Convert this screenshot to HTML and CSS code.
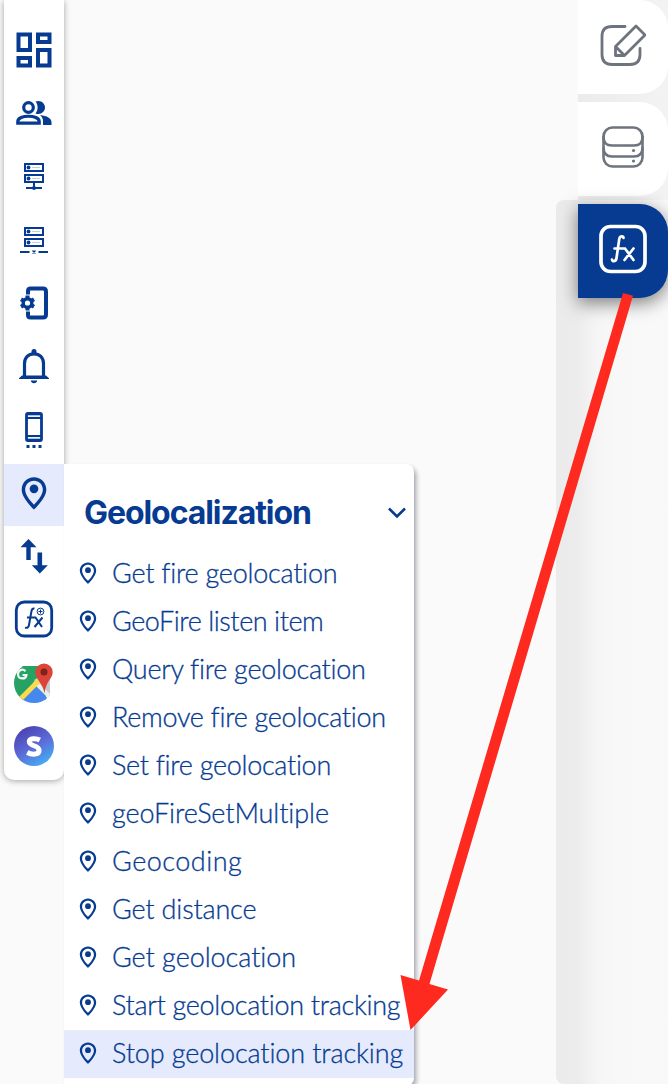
FILE: index.html
```html
<!DOCTYPE html>
<html lang="en">
<head>
<meta charset="utf-8">
<title>Geolocalization</title>
<link rel="stylesheet" href="styles.css">
</head>
<body>
<svg class="defs" width="0" height="0">
  <symbol id="pin" viewBox="0 0 24 24"><path fill="currentColor" d="M12 1.500C7.500 1.500 3.800 5.100 3.800 9.600 3.800 15.500 12 23 12 23s8.200-7.500 8.200-13.400C20.200 5.100 16.500 1.500 12 1.500zm0 2.300c3.300 0 5.900 2.600 5.900 5.900 0 3.300-3.200 7.500-5.900 10.100-2.700-2.600-5.900-6.800-5.900-10.100 0-3.300 2.600-5.900 5.900-5.900z"/><circle fill="currentColor" cx="12" cy="9.200" r="2.900"/></symbol>
</svg>
<div class="app">
  <nav class="sidebar">
    <a class="tool"><svg width="36" height="36" viewBox="0 0 36 36" fill="none" stroke="currentColor" stroke-width="4"><path d="M2.500 2.500h11.500v15.500H2.500zM22 2.500h11.500v7.500H22zM2.500 26h11.500v7.500H2.500zM22 18h11.500v15.500H22z"/></svg></a>
    <a class="tool"><svg width="36" height="26" viewBox="0 0 36 26" fill="none" stroke="currentColor" stroke-width="3.200"><circle cx="12.500" cy="7.500" r="4.800"/><path d="M1.800 23.200v-1.700c0-7 21.400-7 21.400 0v1.700z"/><path fill="currentColor" stroke="none" d="M19.500 1.600c5-2 9.500 1.500 9.500 5.900s-4.500 7.900-9.500 5.900c2.800-3.300 2.800-8.500 0-11.800zM24 15c7 .8 11.500 3.400 11.500 7v3H27v-3.500c0-2.700-.8-4.600-3-6.500z"/></svg></a>
    <a class="tool"><svg width="28" height="28" viewBox="0 0 28 28" fill="none" stroke="currentColor" stroke-width="2"><path d="M5 2h18v7H5zM5 13h18v7H5zM14 20v6M6 26h16"/><path d="M12 5.500h8M12 16.500h8" stroke-width="1" opacity=".25"/><g fill="currentColor" stroke="none"><circle cx="8.500" cy="5.500" r="1.900"/><circle cx="8.500" cy="16.500" r="1.900"/><circle cx="14" cy="26" r="2"/></g></svg></a>
    <a class="tool"><svg width="28" height="28" viewBox="0 0 28 28" fill="none" stroke="currentColor" stroke-width="2"><path d="M5 2h18v7H5zM5 13h18v7H5zM0 26h9.500M18.500 26H28"/><path d="M12.500 24.500l3 3m0-3l-3 3" stroke-width="1.400"/><path d="M12 5.500h8M12 16.500h8" stroke-width="1" opacity=".25"/><g fill="currentColor" stroke="none"><circle cx="8.500" cy="5.500" r="1.900"/><circle cx="8.500" cy="16.500" r="1.900"/></g></svg></a>
    <a class="tool"><svg width="28" height="34" viewBox="0 0 28 34" fill="none" stroke="currentColor"><path stroke-width="4" d="M8 8.500V5q0-2.500 2.500-2.500H23q3 0 3 3v23q0 3-3 3H10.500Q8 31.500 8 29v-3.500"/><circle cx="7.500" cy="17" r="4.300" stroke-width="3.400"/><path stroke-width="4" d="M7.500 9.500v3M7.500 21.500v3M1 13.250l2.600 1.500M11.400 19.250l2.600 1.500M1 20.750l2.600-1.500M11.400 14.750l2.600-1.500"/></svg></a>
    <a class="tool"><svg width="32" height="36" viewBox="0 0 32 36" fill="none" stroke="currentColor"><path stroke-width="3.200" d="M6.500 28V15.500C6.500 9.500 10.500 5.800 16 5.800s9.500 3.700 9.500 9.700V28"/><path fill="currentColor" stroke="none" d="M13.500 6V3.500a2.500 2.500 0 0 1 5 0V6zM4 27.500h24l3 2.700V31H1v-.8zM12.800 32.500h6.400c-.3 1.800-1.500 2.800-3.200 2.800s-2.900-1-3.200-2.800z"/></svg></a>
    <a class="tool"><svg width="20" height="36" viewBox="0 0 20 36" fill="none" stroke="currentColor"><rect x="2.500" y="1.500" width="15" height="27" rx="1.500" stroke-width="2.800"/><path stroke-width="2.200" d="M2 6h16M2 24h16"/><path stroke-width="1" opacity=".4" d="M4 3.700h12M4 26.300h12"/><path stroke-width="3" d="M2.500 34.500h3M8.500 34.500h3M14.500 34.500h3"/></svg></a>
    <a class="tool active"><svg width="36" height="36" viewBox="0 0 24 24"><use href="#pin"/></svg></a>
    <a class="tool"><svg width="28" height="36" viewBox="0 0 28 36" fill="currentColor"><path d="M8.500 1L16.500 9.300h-5.800V22H6.300V9.300H.5zM17.500 14.500v12.700h-5.700l8 8.300 8-8.300h-5.700V14.500z"/></svg></a>
    <a class="tool"><svg width="40" height="38" viewBox="0 0 40 38" fill="none" stroke="currentColor"><rect x="2.300" y="2" width="35.400" height="34" rx="8" stroke-width="2.800"/><path stroke-width="2" d="M20.500 8.500c-2-.3-2.700.7-3 2.500L15 25c-.3 2.300-1.500 3.200-4 2.600M13 17.500h8.500l6.500 9.500M28.500 17.500l-8 9.500"/><circle cx="26.500" cy="11.500" r="3.400" stroke-width="1"/><path stroke-width="1" d="M24.500 11.500h4M26.500 9.500v4"/></svg></a>
    <a class="tool"><svg width="40" height="40" viewBox="0 0 40 40"><clipPath id="disc"><circle cx="20" cy="20" r="20"/></clipPath><g clip-path="url(#disc)"><path fill="#26a364" d="M0 3h32v34H0z"/><path fill="#c6c9ce" d="M20 17l16-10v30z"/><path fill="#4688ef" d="M20 21l16 17-16 5L5 36z"/><path fill="#eceff2" d="M19 20l3-3 18 18-3 3z"/><path fill="#fbdb4b" d="M23 16l3.500 3.500L8 38l-4-3z"/></g><path fill="#db4437" d="M30 .5a8.700 8.700 0 0 1 8.700 8.700c0 6-7 9-8.200 21.300C29.300 21 21.300 15.500 21.300 9.200A8.700 8.700 0 0 1 30 .5z"/><circle cx="30" cy="9" r="3.500" fill="#7b231c"/><path fill="none" stroke="#f2f7f4" stroke-width="2.200" d="M11.500 8.200C8.500 5 4 7.300 4 11.300c0 5 7.700 5.800 8.400.7H8.500"/></svg></a>
    <a class="tool"><svg width="40" height="40" viewBox="0 0 40 40"><defs><linearGradient id="sg" x1=".2" y1="0" x2=".8" y2="1"><stop offset="0" stop-color="#493fae"/><stop offset=".5" stop-color="#5c69d8"/><stop offset="1" stop-color="#43b5f5"/></linearGradient></defs><circle cx="20" cy="20" r="20" fill="url(#sg)"/><path fill="none" stroke="#fff" stroke-width="5" d="M25.800 14c-3.500-1.900-10.500-2.100-10.500 1.800 0 4.700 9.800 3.200 9.800 8.400 0 4.800-7.200 4.700-11.900 2.300"/></svg></a>
  </nav>

  <aside class="tabs">
    <div class="tab"><svg width="46" height="46" viewBox="0 0 46 46" fill="none" stroke="currentColor" stroke-width="2.800"><path stroke-linecap="round" d="M25 4.500H12Q2 4.500 2 14.500v18q0 10 10 10h18q10 0 10-10v-6"/><path stroke-linejoin="round" d="M15.500 24.500L36 4l9 9L24.500 33.500h-9zM16 25l8 8"/></svg></div>
    <div class="tab"><svg width="42" height="42" viewBox="0 0 42 42" fill="none" stroke="currentColor" stroke-width="2.600"><rect x="1.500" y="1.500" width="39" height="39" rx="9"/><path d="M1.500 10v1.500q0 8 8.500 8h22q8.500 0 8.500-8V10M1.500 21.500q0 9 8.500 9h22q8.500 0 8.500-9"/><circle cx="31.500" cy="24.500" r="1.600" fill="currentColor" stroke="none"/><circle cx="31.500" cy="35" r="1.600" fill="currentColor" stroke="none"/></svg></div>
    <div class="tab on"><svg width="48" height="50" viewBox="0 0 48 50" fill="none" stroke="currentColor"><rect x="2" y="2.500" width="44" height="45" rx="9.500" stroke-width="3.700"/><path stroke-width="2.700" stroke-linecap="round" d="M24.500 14c0-2-3.500-2.800-4.200.8L17.500 34c-.4 4-4.500 3.800-4.500 1.500M15.500 24.500h10.500L34.500 36M34.500 24.500l-9 11.500"/></svg></div>
    <div class="rail"></div>
  </aside>
</div>

<section class="flyout">
  <header class="head"><h2>Geolocalization</h2><svg width="18" height="12" viewBox="0 0 18 12" fill="none" stroke="currentColor" stroke-width="2.600"><path d="M1 1.500l8 8 8-8"/></svg></header>
  <ul class="list">
    <li><svg class="ico"><use href="#pin"/></svg><span>Get fire geolocation</span></li>
    <li><svg class="ico"><use href="#pin"/></svg><span>GeoFire listen item</span></li>
    <li><svg class="ico"><use href="#pin"/></svg><span>Query fire geolocation</span></li>
    <li><svg class="ico"><use href="#pin"/></svg><span>Remove fire geolocation</span></li>
    <li><svg class="ico"><use href="#pin"/></svg><span>Set fire geolocation</span></li>
    <li><svg class="ico"><use href="#pin"/></svg><span>geoFireSetMultiple</span></li>
    <li><svg class="ico"><use href="#pin"/></svg><span>Geocoding</span></li>
    <li><svg class="ico"><use href="#pin"/></svg><span>Get distance</span></li>
    <li><svg class="ico"><use href="#pin"/></svg><span>Get geolocation</span></li>
    <li><svg class="ico"><use href="#pin"/></svg><span>Start geolocation tracking</span></li>
    <li class="active"><svg class="ico"><use href="#pin"/></svg><span>Stop geolocation tracking</span></li>
  </ul>
</section>

<svg class="arrow" width="668" height="1084" viewBox="0 0 668 1084" fill="#ff2a1f"><path d="M623 293l10 2.800L429.500 984l18.500 5.500-37.500 40.500-10-55 18.500 5.500z"/></svg>
</body>
</html>
```

FILE: styles.css
```css
* { box-sizing: border-box; }
body {
  margin: 0;
  width: 668px;
  height: 1084px;
  position: relative;
  overflow: hidden;
  background: #fafafa;
  color: #063b91;
  font-family: Lato, sans-serif;
}
.defs { position: absolute; }
svg { display: block; flex: none; }
.app { display: flex; justify-content: space-between; align-items: flex-start; height: 1084px; padding-left: 4px; }
.sidebar {
  width: 60px;
  height: 780px;
  padding-top: 21px;
  display: flex;
  flex-direction: column;
  gap: 1.600px;
  background: #fff;
  border-radius: 0 0 10px 10px;
  box-shadow: 0 1px 6px rgba(0, 0, 0, .35);
}
.tool { height: 61.700px; flex: none; display: flex; align-items: center; justify-content: center; padding-bottom: 4px; }
.tool.active { background: #e5ebfc; }

.tabs { width: 112px; height: 1084px; display: flex; flex-direction: column; align-items: flex-end; gap: 8px; position: relative; }
.tabs::before { content: ""; position: absolute; left: 22px; right: 0; top: 0; height: 250px; background: linear-gradient(90deg, #ebebeb, #f3f3f3); }
.tab {
  width: 90px;
  height: 94px;
  flex: none;
  display: flex;
  align-items: center;
  justify-content: center;
  padding-bottom: 4px;
  position: relative;
  background: #fff;
  color: #6d747d;
  border-radius: 0 28px 28px 0;
}
.tab.on { background: #063b91; color: #fff; box-shadow: 0 5px 18px rgba(0, 0, 0, .5); z-index: 1; }
.rail { position: absolute; left: 0; right: 0; top: 200px; bottom: 0; border-radius: 8px 0 0 8px; background: linear-gradient(90deg, #ebebeb 0, #ececec 22px, #f5f5f5 40px, #f8f8f8 60px, #f9f9f9 100%); }

.flyout {
  position: absolute;
  left: 64px;
  top: 464px;
  width: 350px;
  height: 622px;
  background: #fff;
  border-radius: 0 8px 8px 0;
  box-shadow: 3px 3px 5px -1px rgba(20, 20, 50, .4);
}
.head { height: 85px; padding: 12px 8px 0 20px; display: flex; align-items: center; justify-content: space-between; }
.head h2 { margin: 0; font: 700 32px/40px Inter, sans-serif; letter-spacing: -1.070px; }
.list { list-style: none; margin: 0; padding: 0; }
.list li { height: 48px; padding-left: 12px; display: flex; align-items: center; gap: 12px; font-size: 27px; font-weight: 300; line-height: 48px; white-space: nowrap; font-variant-ligatures: none; -webkit-text-stroke: .3px currentColor; }
.list li.active { background: none; position: relative; }
.list li.active::before { content: ""; position: absolute; inset: 1px 0 -1px; z-index: -1; background: #e5ebfc; }
.list li.active { z-index: 0; }
.list li:nth-child(1) { letter-spacing: -.25px; }
.list li:nth-child(2) { letter-spacing: -.44px; }
.list li:nth-child(3) { letter-spacing: -.28px; }
.list li:nth-child(4) { letter-spacing: -.3px; }
.list li:nth-child(5) { letter-spacing: -.3px; }
.list li:nth-child(6) { letter-spacing: -.1px; }
.list li:nth-child(7) { letter-spacing: .5px; }
.list li:nth-child(8) { letter-spacing: -.17px; }
.list li:nth-child(9) { letter-spacing: -.05px; }
.list li:nth-child(10) { letter-spacing: -.3px; }
.list li:nth-child(11) { letter-spacing: -.12px; }
.ico { width: 24px; height: 26px; }
.arrow { position: absolute; left: 0; top: 0; z-index: 3; }
```
